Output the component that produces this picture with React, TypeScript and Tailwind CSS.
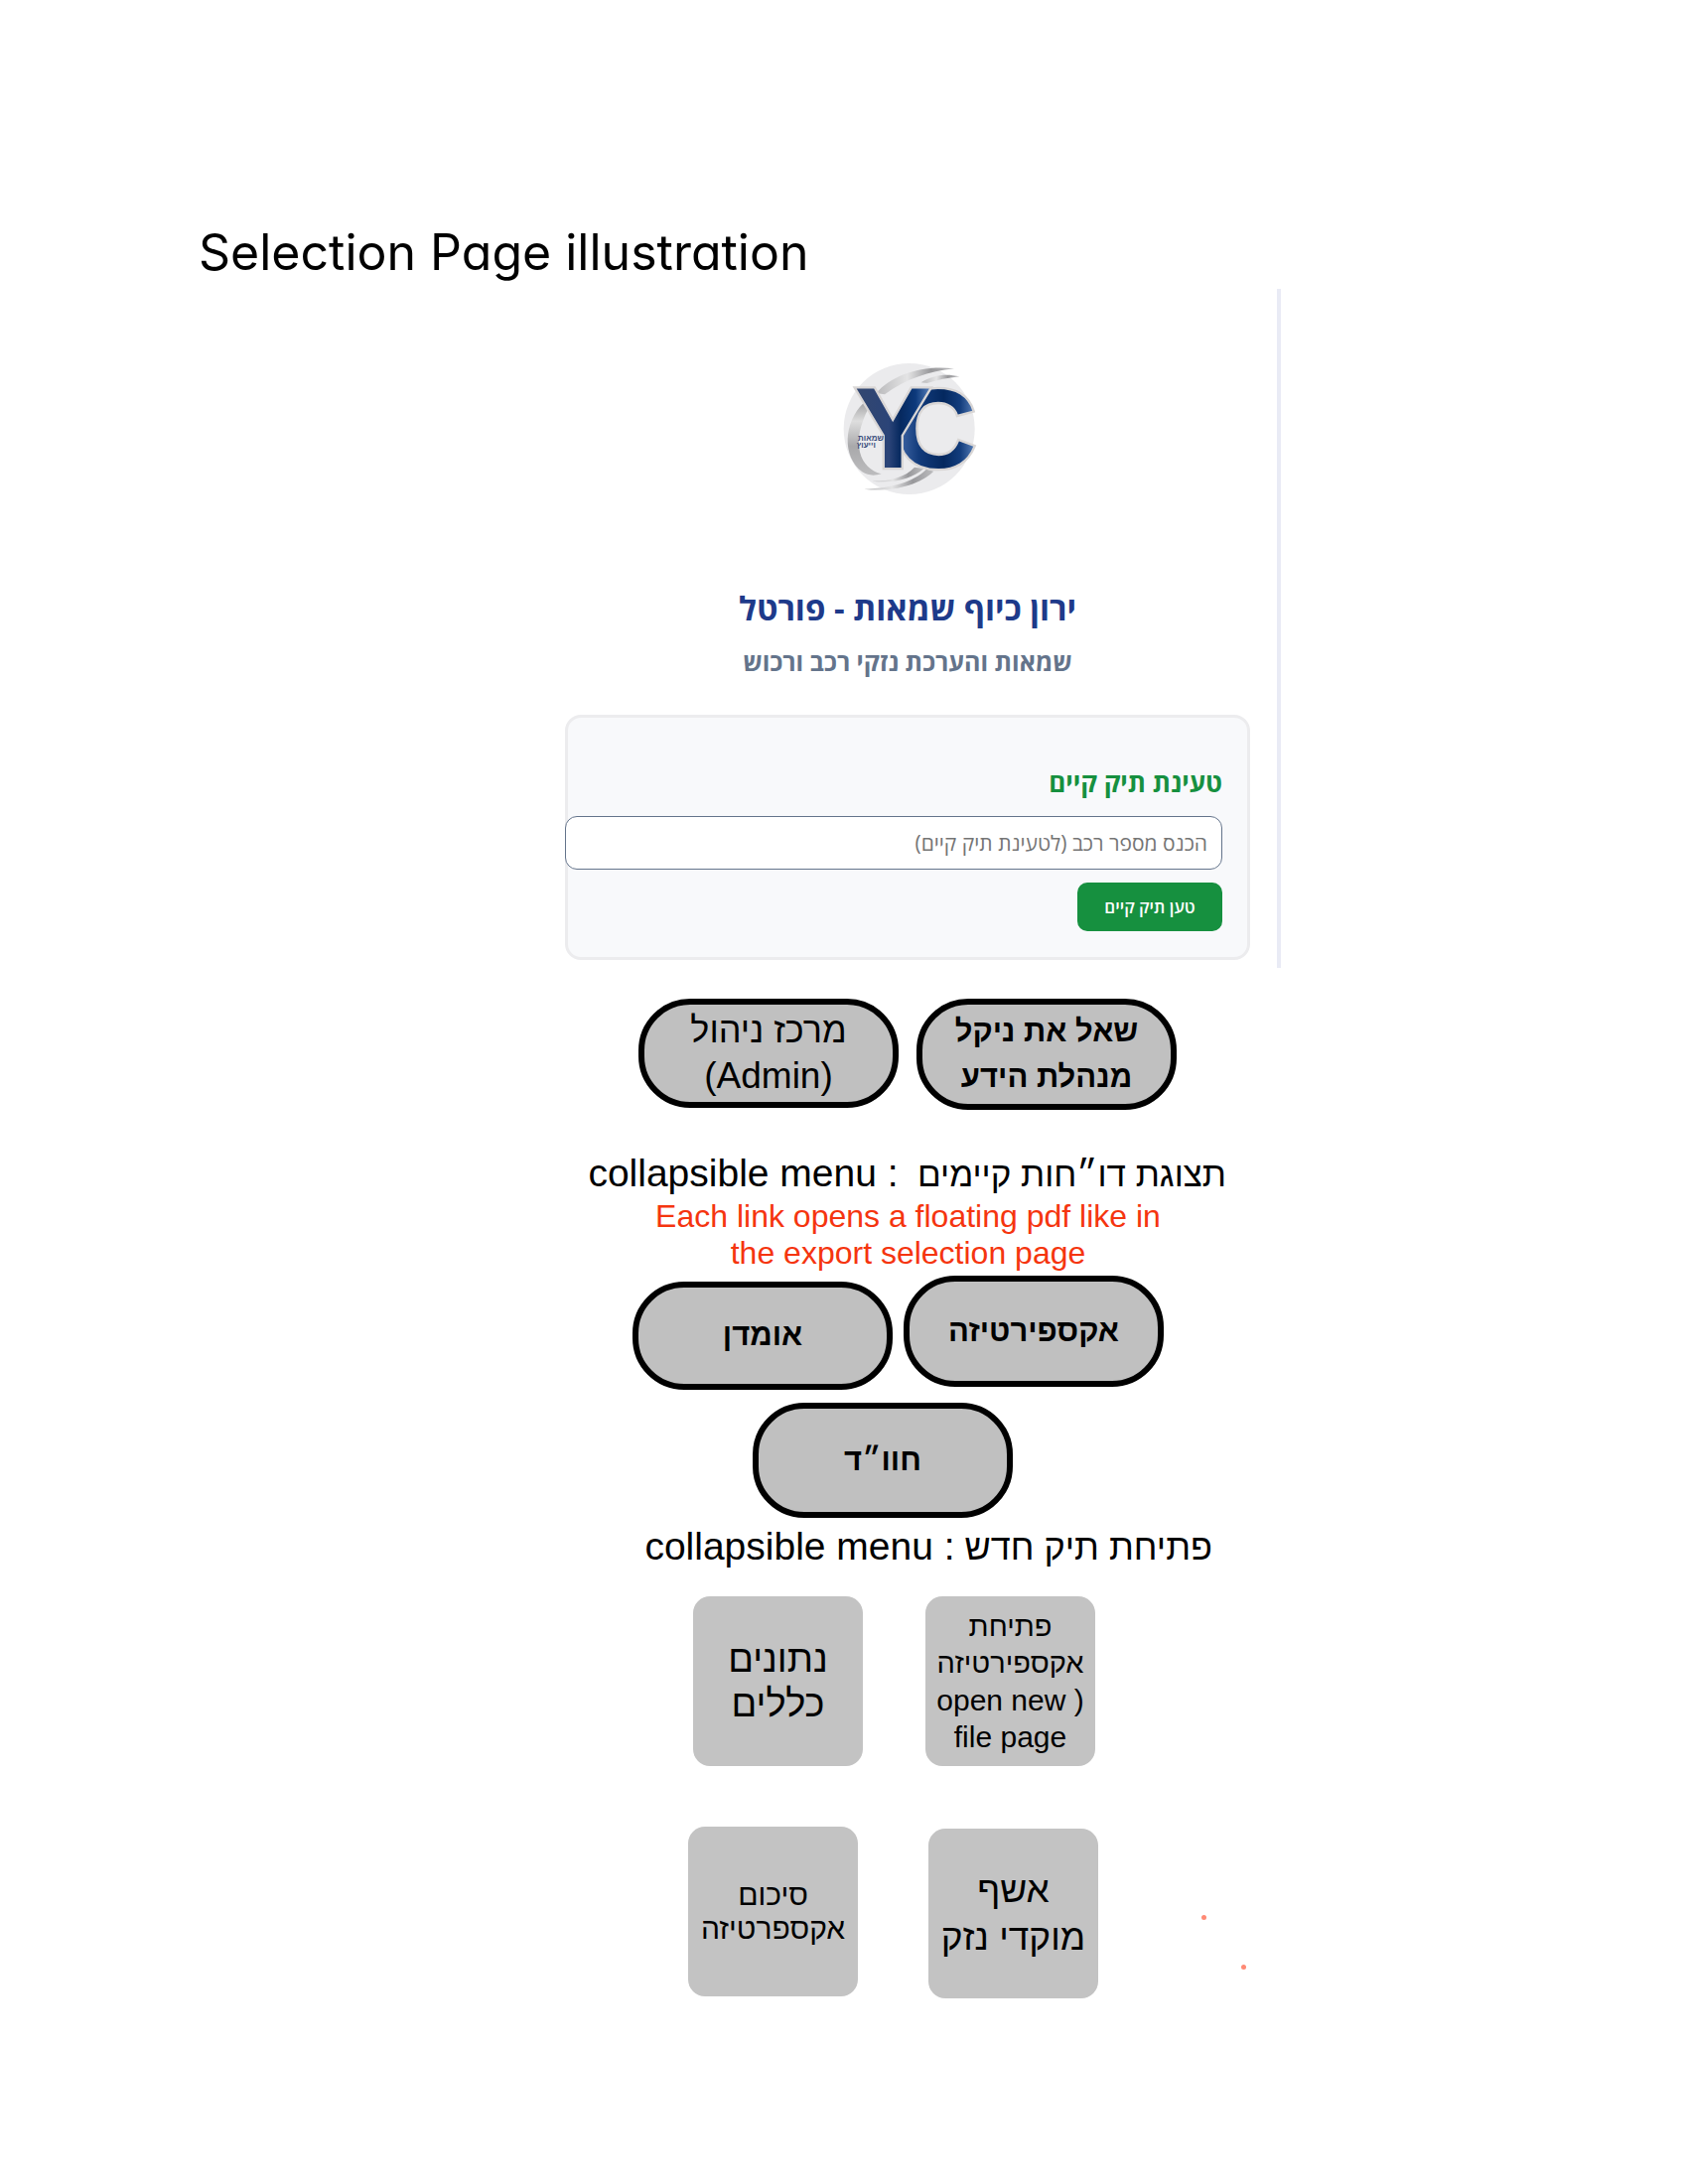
import React from "react";

function Logo() {
  return (
    <svg viewBox="0 0 510 480" direction="ltr" className="h-[160px] w-[170px]" role="img" aria-label="YC">
      <defs>
        <linearGradient id="navyY" x1="0" y1="0" x2="1" y2="0">
          <stop offset="0" stopColor="#33476f" />
          <stop offset="0.45" stopColor="#2b4478" />
          <stop offset="0.6" stopColor="#06295f" />
          <stop offset="0.8" stopColor="#0d3a7c" />
          <stop offset="1" stopColor="#5b83bd" />
        </linearGradient>
        <linearGradient id="navyC" x1="0" y1="0" x2="1" y2="0">
          <stop offset="0" stopColor="#4a6fae" />
          <stop offset="0.3" stopColor="#123b7b" />
          <stop offset="0.6" stopColor="#04285f" />
          <stop offset="0.8" stopColor="#123c7c" />
          <stop offset="1" stopColor="#5f86be" />
        </linearGradient>
        <linearGradient id="silver" x1="0" y1="0" x2="1" y2="0">
          <stop offset="0" stopColor="#b9b9bb" />
          <stop offset="0.4" stopColor="#e4e4e5" />
          <stop offset="0.7" stopColor="#98989b" />
          <stop offset="1" stopColor="#bcbcbe" />
        </linearGradient>
        <linearGradient id="ring" x1="0" y1="0" x2="0" y2="1">
          <stop offset="0" stopColor="#a5a5a7" />
          <stop offset="0.25" stopColor="#dedede" />
          <stop offset="0.6" stopColor="#a9a9ab" />
          <stop offset="1" stopColor="#bcbcbe" />
        </linearGradient>
      </defs>
      <circle cx="260" cy="246" r="198" fill="#ebebed" />
      <path d="M160 138 C210 82 300 52 396 64 C320 72 250 95 186 142 Z" fill="url(#silver)" />
      <path d="M296 106 C330 84 370 78 412 88 C376 92 346 98 314 108 Z" fill="url(#silver)" />
      <path d="M122 168 C62 225 56 330 118 376 C136 388 156 388 176 382 C112 366 80 290 138 182 Z" fill="url(#ring)" />
      <path d="M148 404 C205 404 250 390 276 362 L304 366 C270 396 215 412 148 404 Z" fill="url(#silver)" />
      <path d="M124 428 C210 424 270 408 312 368 L334 374 C290 418 200 438 124 428 Z" fill="url(#silver)" />
      <g fontFamily="'Liberation Sans', Arial, sans-serif" fontWeight="700" paintOrder="stroke" stroke="#d9d6d5" strokeWidth="14">
        <text x="216" y="364" fontSize="342" fill="url(#navyC)">C</text>
        <text x="95" y="364" fontSize="346" fill="url(#navyY)">Y</text>
      </g>
      <g fontFamily="'Liberation Sans', Arial, sans-serif" fontSize="24" fontWeight="700" fill="#3a4d7c" textAnchor="middle">
        <text x="144" y="282">שמאות</text>
        <text x="130" y="304">וייעוץ</text>
      </g>
    </svg>
  );
}

function Pill({ children, className = "" }: { children: React.ReactNode; className?: string }) {
  return (
    <button
      type="button"
      className={`flex w-[262px] items-center justify-center rounded-[52px] border-[6px] border-black bg-[#c0c0c0] text-center text-black ${className}`}
    >
      {children}
    </button>
  );
}

function Tile({ children, className = "" }: { children: React.ReactNode; className?: string }) {
  return (
    <button
      type="button"
      className={`flex size-[171px] flex-col items-center justify-center rounded-[17px] bg-[#c3c3c3] text-center text-black ${className}`}
    >
      {children}
    </button>
  );
}

export default function App() {
  return (
    <main className="min-h-screen bg-white px-[200px] pt-[218px] pb-[183px] font-['Liberation_Sans',Arial,sans-serif] text-black">
      <h1 className="font-['Century_Gothic',Inter,sans-serif] text-[50px] leading-[73px] font-normal [font-feature-settings:'cv11']">
        Selection Page illustration
      </h1>

      <div dir="rtl" className="mr-[210px] ml-auto max-w-[721px]">
        <section className="border-r-4 border-[#e9ebf5] pr-[27px] pb-[8px] font-['Open_Sans','Liberation_Sans',sans-serif]">
          <div className="flex justify-center pt-[59px]">
            <Logo />
          </div>
          <h2 className="mt-[81px] text-center text-[33px] leading-[44px] font-bold text-[#1e3a8a]">ירון כיוף שמאות - פורטל</h2>
          <p className="mt-[9px] text-center text-[25px] leading-[44px] font-bold text-[#64748b]">שמאות והערכת נזקי רכב ורכוש</p>

          <form
            className="mt-[32px] rounded-[16px] border-[3px] border-[#ececee] bg-[#f8f9fb] pt-[46px] pr-[25px] pb-[26px]"
            onSubmit={(e) => e.preventDefault()}
          >
            <label htmlFor="plate" className="block text-[26px] leading-[39px] font-bold text-[#16903f]">
              טעינת תיק קיים
            </label>
            <input
              id="plate"
              type="text"
              placeholder="הכנס מספר רכב (לטעינת תיק קיים)"
              className="mt-[14px] -ml-[3px] block h-[54px] w-[calc(100%+3px)] rounded-[12px] border border-[#64748b] bg-white px-[14px] text-[21px] placeholder:text-[#757575]"
            />
            <button type="submit" className="mt-[13px] block h-[49px] w-[146px] rounded-[10px] bg-[#16903f] text-[17px] font-semibold text-white">
              טען תיק קיים
            </button>
          </form>
        </section>

        <div className="mt-[31px] mr-[105px] flex items-start gap-[18px]">
          <Pill className="h-[112px] text-[31px] leading-[46px] font-bold">
            שאל את ניקל
            <br />
            מנהלת הידע
          </Pill>
          <Pill className="h-[110px] flex-col text-[36px] leading-[46px]">
            <span>מרכז ניהול</span>
            <span className="text-[37px]">(Admin)</span>
          </Pill>
        </div>

        <h3 className="mt-[42px] mr-[55px] text-[35px] leading-[44px] whitespace-pre">
          {"תצוגת דו״חות קיימים  "}
          <span className="text-[39px]">: collapsible menu</span>
        </h3>
        <p dir="ltr" className="mt-[2px] mr-[30px] text-center text-[32px] leading-[37px] text-[#f5350f]">
          Each link opens a floating pdf like in
          <br />
          the export selection page
        </p>

        <div className="mt-[4px] mr-[118px] flex items-start gap-[11px]">
          <Pill className="h-[112px] text-[31px] font-bold">אקספירטיזה</Pill>
          <Pill className="mt-[6px] h-[109px] text-[31px] font-bold">אומדן</Pill>
        </div>
        <Pill className="mt-[13px] mr-[270px] h-[116px] text-[31px] font-bold">חוו״ד</Pill>

        <h3 className="mt-[7px] mr-[69px] text-[36px] leading-[44px] whitespace-pre">
          {"פתיחת תיק חדש "}
          <span className="text-[39px]">: collapsible menu</span>
        </h3>

        <div className="mt-[27px] mr-[187px] flex gap-[63px]">
          <Tile className="text-[29px] leading-[37px]">
            <span>פתיחת</span>
            <span>אקספירטיזה</span>
            <span className="text-[30px]">( open new</span>
            <span className="text-[30px]">file page</span>
          </Tile>
          <Tile className="text-[38px] leading-[45px]">
            <span>נתונים</span>
            <span>כללים</span>
          </Tile>
        </div>
        <div className="relative mt-[61px] mr-[184px] flex gap-[71px]">
          <Tile className="mt-[2px] text-[37px] leading-[48px]">
            <span>אשף</span>
            <span>מוקדי נזק</span>
          </Tile>
          <Tile className="text-[30px] leading-[34px]">
            <span>סיכום</span>
            <span>אקספרטיזה</span>
          </Tile>
          <span className="absolute top-[89px] -right-[109px] size-[5px] rounded-full bg-[#ff8a75]" />
          <span className="absolute top-[139px] -right-[149px] size-[5px] rounded-full bg-[#ff8a75]" />
        </div>
      </div>
    </main>
  );
}
